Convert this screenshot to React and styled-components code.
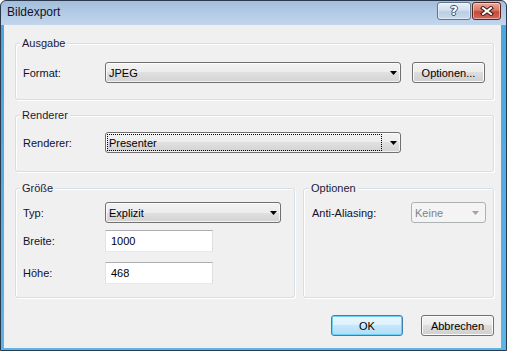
import React from "react";
import styled, { createGlobalStyle } from "styled-components";

const Global = createGlobalStyle`
  html, body { margin:0; padding:0; background:#fff; }
  body { font-family:"Liberation Sans", Arial, sans-serif; font-size:11px; color:#000; }
`;

const Window = styled.div`
  width:507px;
  height:351px;
  box-sizing:border-box;
  border:1px solid #2a3a4c;
  border-radius:6px 6px 0 0;
  background:linear-gradient(to bottom, #a3bedb 0, #b3cbe5 12px, #c2d6ec 24px, #4aa6df 24px, #5cb4e7 100%);
  padding:0 5px 2px 3px;
  display:flex;
  flex-direction:column;
`;
const TitleBar=styled.div`
  height:24px;
  flex:none;
  display:flex;
  align-items:flex-start;
  padding-left:3px;
`;
const TitleText=styled.span`
  font-family:"Liberation Sans", Arial, sans-serif;
  font-size:12px;
  line-height:23px;
  color:#14102a;
`;
const CaptionButtons=styled.div`
  margin-left:auto;
  margin-top:1px;
  display:flex;
  gap:1px;
`;
const CapBtn=styled.div`
  width:${p=>p.$w}px;
  height:18px;
  box-sizing:border-box;
  border:1px solid ${p=>p.$close ? "#5a241e" : "#5f7590"};
  border-radius:3px;
  background:${p=>p.$close
    ? "linear-gradient(#e9aa9c 0%, #d9786a 45%, #c4483a 55%, #cf6b5c 100%)"
    : "linear-gradient(#e8eff8 0%, #d2e0ef 45%, #b9cde4 55%, #c9daec 100%)"};
  box-shadow:inset 0 0 0 1px rgba(255,255,255,.45);
  display:flex;
  align-items:center;
  justify-content:center;
`;
const HelpGlyph=styled.span`
  font-family:"DejaVu Sans", sans-serif;
  font-weight:bold;
  font-size:13px;
  line-height:14px;
  color:#fff;
  text-shadow:1px 0 0 #3c4d62, -1px 0 0 #3c4d62, 0 1px 0 #3c4d62, 0 -1px 0 #3c4d62;
`;

const Client=styled.div`
  flex:1;
  background:#f0f0f0;
  display:flex;
  flex-direction:column;
  padding:18px 7px 0 11px;
`;
const Group=styled.div`
  box-sizing:border-box;
  border:1px solid #d5dfe5;
  border-radius:3px;
  box-shadow:inset 1px 1px 0 #fff, 1px 1px 0 #fff;
  padding:0 7px ${p=>p.$pb}px ${p=>p.$pl || 7}px;
  margin-top:${p=>p.$mt || 0}px;
  width:${p=>p.$w ? p.$w + "px" : "auto"};
  flex:${p=>p.$grow ? 1 : "none"};
`;
const Caption=styled.div`
  width:fit-content;
  margin:-7px 0 0 -3px;
  padding:0 2px;
  line-height:12px;
  background:#f0f0f0;
  color:#1a1a3a;
`;
const Row=styled.div`
  display:flex;
  align-items:center;
  margin-top:${p=>p.$mt}px;
`;
const Label=styled.span`
  width:${p=>p.$w || 82}px;
  flex:none;
  color:#10102a;
`;
const Combo=styled.div`
  width:${p=>p.$w}px;
  height:21px;
  box-sizing:border-box;
  border:1px solid ${p=>p.$disabled ? "#adb2b5" : "#707070"};
  border-radius:3px;
  background:${p=>p.$disabled
    ? "#f4f4f4"
    : "linear-gradient(#f3f3f3 0%, #ececec 50%, #e0e0e0 50%, #d3d3d3 100%)"};
  box-shadow:${p=>p.$disabled ? "none" : "inset 0 0 0 1px rgba(255,255,255,.7)"};
  display:flex;
  align-items:center;
  padding-right:${p=>p.$disabled ? 6 : 3}px;
  color:${p=>p.$disabled ? "#838383" : "#000"};
`;
const ComboValue=styled.div`
  flex:1;
  align-self:stretch;
  margin:1px 8px 1px 1px;
  border:1px dotted ${p=>p.$focus ? "#000" : "transparent"};
  padding-left:1px;
  display:flex;
  align-items:center;
`;
const Arrow=({color})=>(
  <svg width="7" height="4" viewBox="0 0 7 4" style={{flex:"none"}}>
    <polygon points="0,0 7,0 3.5,4" fill={color}/>
  </svg>
);
const TextBox=styled.input`
  width:108px;
  height:22px;
  box-sizing:border-box;
  margin:0;
  background:#fff;
  border:1px solid;
  border-color:#abadb3 #dbdfe6 #e3e9ef #e2e3ea;
  padding:0 0 0 5px;
  font:11px "Liberation Sans", Arial, sans-serif;
  color:#000;
  outline:none;
`;
const SplitRow=styled.div`
  display:flex;
  gap:8px;
  margin-top:16px;
`;
const ButtonBar=styled.div`
  display:flex;
  justify-content:flex-end;
  gap:18px;
  margin-top:17px;
`;
const Btn=styled.button`
  width:${p=>p.$w}px;
  height:21px;
  box-sizing:border-box;
  margin:0;
  padding:0;
  font:11px "Liberation Sans", Arial, sans-serif;
  color:#000;
  border:1px solid ${p=>p.$default ? "#3c7fb1" : "#707070"};
  border-radius:3px;
  background:${p=>p.$default
    ? "linear-gradient(#eaf6fd 0%, #dcf1fc 50%, #c4e8fc 50%, #b0ddf6 100%)"
    : "linear-gradient(#f3f3f3 0%, #ececec 50%, #dddddd 50%, #cfcfcf 100%)"};
  box-shadow:${p=>p.$default ? "inset 0 0 0 1px #6fd0f6" : "inset 0 0 0 1px #fbfbfb"};
`;

export default function App(){
  return <>
    <Global/>
    <Window>
      <TitleBar>
        <TitleText>Bildexport</TitleText>
        <CaptionButtons>
          <CapBtn $w={34}><HelpGlyph>?</HelpGlyph></CapBtn>
          <CapBtn $w={29} $close>
            <svg width="14" height="10" viewBox="0 0 14 10">
              <path d="M3 2 L11 8 M11 2 L3 8" stroke="#3a1612" strokeWidth="4" strokeLinecap="square"/>
              <path d="M3 2 L11 8 M11 2 L3 8" stroke="#fff" strokeWidth="2" strokeLinecap="square"/>
            </svg>
          </CapBtn>
        </CaptionButtons>
      </TitleBar>
      <Client>
        <Group $pb={16}>
          <Caption>Ausgabe</Caption>
          <Row $mt={13}>
            <Label>Format:</Label>
            <Combo $w={296}>
              <ComboValue>JPEG</ComboValue>
              <Arrow color="#000"/>
            </Combo>
            <Btn $w={73} style={{marginLeft:11}}>Optionen...</Btn>
          </Row>
        </Group>
        <Group $pb={18} $mt={15}>
          <Caption>Renderer</Caption>
          <Row $mt={11}>
            <Label>Renderer:</Label>
            <Combo $w={296}>
              <ComboValue $focus>Presenter</ComboValue>
              <Arrow color="#000"/>
            </Combo>
          </Row>
        </Group>
        <SplitRow>
          <Group $w={280} $pb={13}>
            <Caption>Größe</Caption>
            <Row $mt={8}>
              <Label>Typ:</Label>
              <Combo $w={176}>
                <ComboValue>Explizit</ComboValue>
                <Arrow color="#000"/>
              </Combo>
            </Row>
            <Row $mt={7}>
              <Label>Breite:</Label>
              <TextBox defaultValue="1000" readOnly/>
            </Row>
            <Row $mt={10}>
              <Label>Höhe:</Label>
              <TextBox defaultValue="468" readOnly/>
            </Row>
          </Group>
          <Group $grow $pb={13} $pl={8}>
            <Caption>Optionen</Caption>
            <Row $mt={8}>
              <Label $w={99}>Anti-Aliasing:</Label>
              <Combo $w={75} $disabled>
                <ComboValue>Keine</ComboValue>
                <Arrow color="#a3a3a3"/>
              </Combo>
            </Row>
          </Group>
        </SplitRow>
        <ButtonBar>
          <Btn $w={72} $default>OK</Btn>
          <Btn $w={73}>Abbrechen</Btn>
        </ButtonBar>
      </Client>
    </Window>
  </>;
}
